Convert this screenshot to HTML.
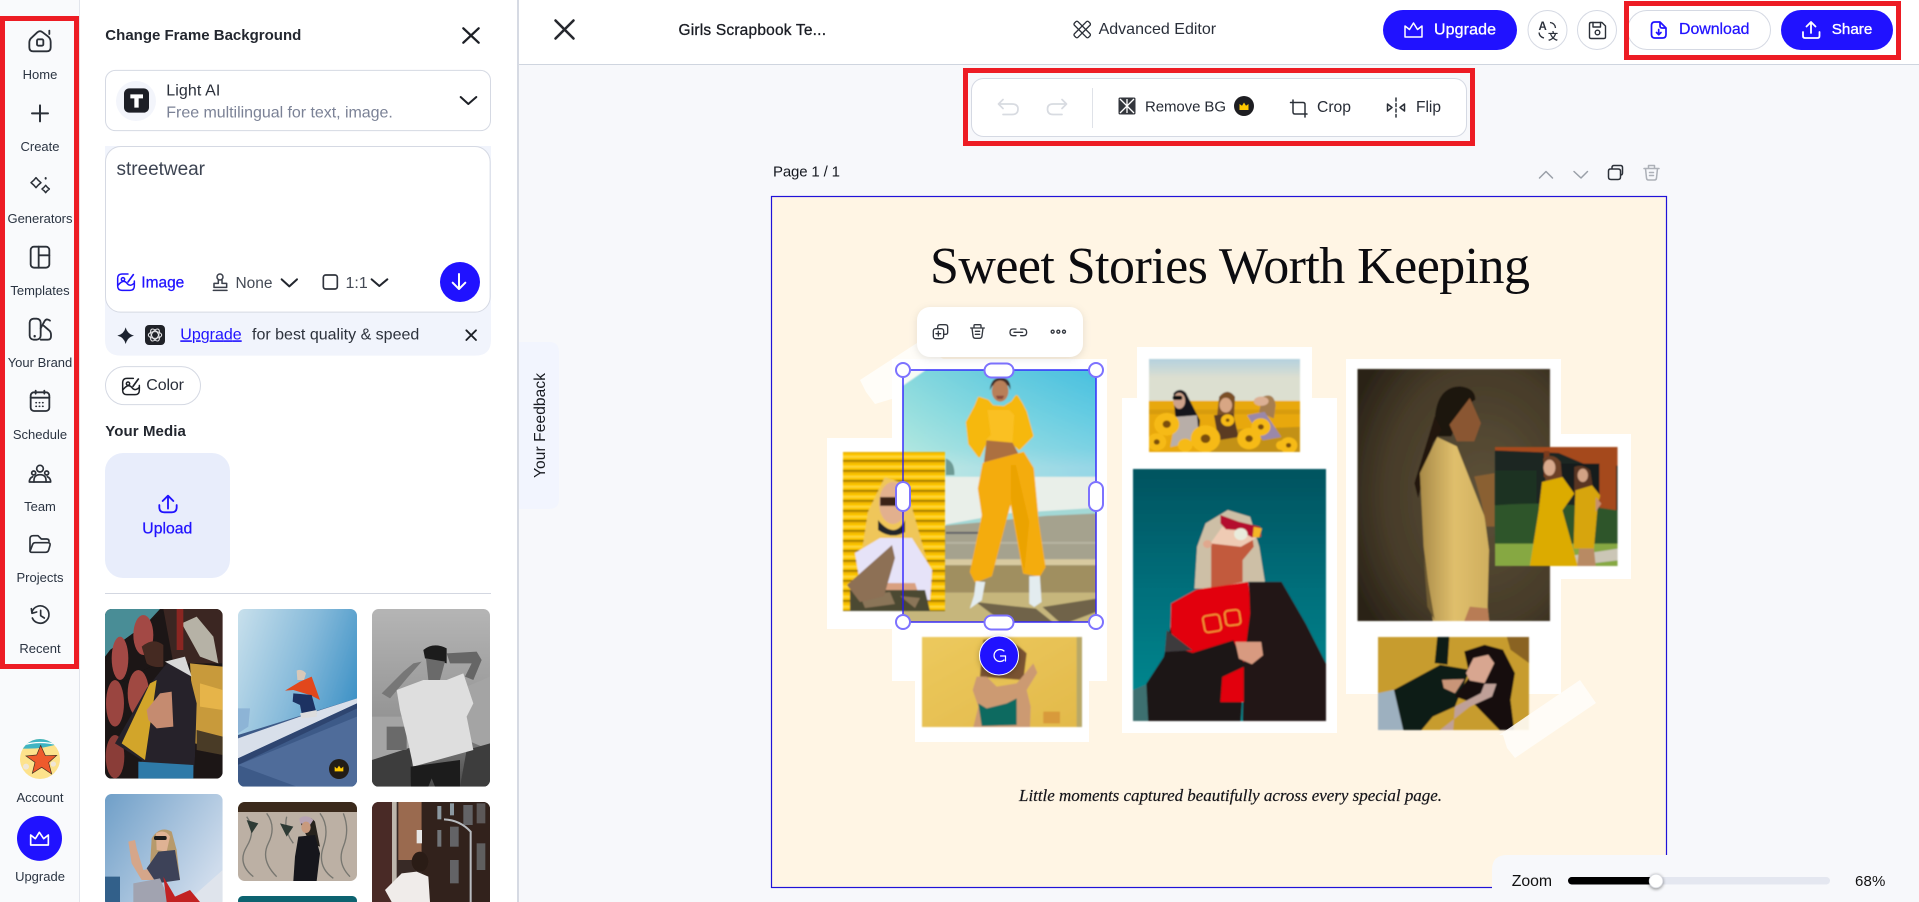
<!DOCTYPE html>
<html lang="en">
<head>
<meta charset="utf-8">
<title>Change Frame Background</title>
<style>
html,body{margin:0;padding:0;width:1919px;height:902px;overflow:hidden;background:#f7f8fb}
svg.root{display:block;position:absolute;left:0;top:0}
text{font-family:"Liberation Sans","Noto Sans CJK SC",sans-serif;white-space:pre}
.lb{font-size:13px;fill:#2b3442;text-anchor:middle}
.t15{font-size:16px;fill:#2a2f3a}
.blue{fill:#2012ff;stroke:#2012ff;stroke-width:.25}
.ic{fill:none;stroke:#2b3038;stroke-linecap:round;stroke-linejoin:round}
</style>
</head>
<body>
<svg class="root" xmlns="http://www.w3.org/2000/svg" width="1919" height="902" viewBox="0 0 1919 902">
<defs>
<filter id="b" x="-2%" y="-2%" width="104%" height="104%"><feGaussianBlur stdDeviation=".8"/></filter>
<linearGradient id="gSky" x1="0" y1="0" x2="0" y2="1"><stop offset="0" stop-color="#5cc6de"/><stop offset=".3" stop-color="#8fdbe2"/><stop offset=".5" stop-color="#b8e6e4"/><stop offset=".62" stop-color="#e9efe9"/></linearGradient>
<linearGradient id="gSkyX" x1="0" y1="0" x2="1" y2="0"><stop offset="0" stop-color="#a8e6dc" stop-opacity=".55"/><stop offset="1" stop-color="#2fb8e2" stop-opacity=".45"/></linearGradient>
<linearGradient id="gFl" x1="0" y1="0" x2="0" y2="1"><stop offset="0" stop-color="#b4d1de"/><stop offset=".45" stop-color="#dcdfd0"/></linearGradient>
<linearGradient id="gTeal" x1="0" y1="0" x2="0" y2="1"><stop offset="0" stop-color="#00535f"/><stop offset=".5" stop-color="#00707c"/><stop offset="1" stop-color="#008c92"/></linearGradient>
<radialGradient id="gDark" cx=".65" cy=".5" r=".75"><stop offset="0" stop-color="#5e5239"/><stop offset=".7" stop-color="#453a28"/><stop offset="1" stop-color="#2b2418"/></radialGradient>
<linearGradient id="gJkt" x1="0" y1="0" x2="1" y2="0"><stop offset="0" stop-color="#a88a48"/><stop offset=".5" stop-color="#e0bf6c"/><stop offset="1" stop-color="#cfae5e"/></linearGradient>
<linearGradient id="gT2" x1="0" y1="0" x2="1" y2=".5"><stop offset="0" stop-color="#c8e0ec"/><stop offset=".55" stop-color="#86bada"/><stop offset="1" stop-color="#3f92c6"/></linearGradient>
<linearGradient id="gT3" x1="0" y1="0" x2="0" y2="1"><stop offset="0" stop-color="#b5b5b5"/><stop offset=".6" stop-color="#959595"/><stop offset="1" stop-color="#4a4a4a"/></linearGradient>
<linearGradient id="gT4" x1="0" y1="0" x2="1" y2=".6"><stop offset="0" stop-color="#6f9fc8"/><stop offset="1" stop-color="#cfdcec"/></linearGradient>
<linearGradient id="gB" x1="0" y1="0" x2="1" y2="1"><stop offset="0" stop-color="#ecc95d"/><stop offset="1" stop-color="#e2b94a"/></linearGradient>
<pattern id="pStripe" width="8" height="10" patternUnits="userSpaceOnUse"><rect width="8" height="10" fill="#fdc600"/><rect y="0" width="8" height="1.4" fill="#7d6000"/><rect y="1.4" width="8" height="2" fill="#e6ad00"/><rect y="6" width="8" height="1.5" fill="#ffdb3d"/></pattern>
<clipPath id="c1"><rect x="315" y="477" width="353" height="509" rx="20"/></clipPath>
<clipPath id="c2"><rect x="714" y="477" width="357" height="533" rx="20"/></clipPath>
<clipPath id="c3"><rect x="1116" y="477" width="354" height="533" rx="20"/></clipPath>
<clipPath id="c4"><rect x="315" y="1032" width="353" height="340" rx="20"/></clipPath>
<clipPath id="c5"><rect x="714" y="1056" width="357" height="237" rx="20"/></clipPath>
<clipPath id="c6"><rect x="1116" y="1056" width="354" height="320" rx="20"/></clipPath>
<clipPath id="cAv"><circle cx="120" cy="927" r="60"/></clipPath>
</defs>

<!-- base regions -->
<rect width="1919" height="902" fill="#f7f8fb"/>
<rect x="0" y="0" width="79" height="902" fill="#f9fafc"/>
<rect x="79" y="0" width="1" height="902" fill="#e2e5ec"/>
<rect x="80" y="0" width="437" height="902" fill="#fff"/>
<rect x="517" y="0" width="2" height="902" fill="#d6dae3"/>
<rect x="519" y="0" width="1400" height="64" fill="#fff"/>
<rect x="519" y="64" width="1400" height="1" fill="#cfd5df"/>

<!-- SIDEBAR labels -->
<text class="lb" x="40" y="79">Home</text>
<text class="lb" x="40" y="151">Create</text>
<text class="lb" x="40" y="223">Generators</text>
<text class="lb" x="40" y="295">Templates</text>
<text class="lb" x="40" y="367">Your Brand</text>
<text class="lb" x="40" y="439">Schedule</text>
<text class="lb" x="40" y="511">Team</text>
<text class="lb" x="40" y="582">Projects</text>
<text class="lb" x="40" y="653">Recent</text>
<text class="lb" x="40" y="802">Account</text>
<text class="lb" x="40" y="881">Upgrade</text>

<!-- zoom-1 coordinate icons -->
<g transform="scale(.33333)">
 <g class="ic" stroke-width="5.5">
  <path d="M88 128Q88 118 96 112L112 97Q120 90 128 97L145 110Q152 116 152 126V142Q152 154 140 154H100Q88 154 88 142Z"/>
  <path d="M148 92V102"/>
  <rect x="111" y="118" width="19" height="19" rx="4"/>
  <path d="M120 316V364M96 340H144" stroke-width="6"/>
  <path stroke-width="4.500" d="M108 533L115 541L123 548L115 555L108 563L101 555L93 548L101 541Z"/>
  <path stroke-width="4.500" d="M137 556L142 562L148 567L142 572L137 578L132 572L126 567L132 562Z"/>
  <path stroke-width="6" d="M137 534V536"/>
  <rect x="92" y="740" width="56" height="63" rx="10"/>
  <path d="M116 740V803M116 766H148"/>
  <rect x="89" y="956" width="33" height="63" rx="12"/>
  <path d="M122 985L134 963Q139 955 147 960L150 962"/>
  <path d="M122 1019H143Q153 1019 153 1009V1004Q153 995 146 990L131 977"/>
  <path stroke-width="7" d="M104 1008V1009"/>
  <rect x="92" y="1177" width="56" height="56" rx="10"/>
  <path d="M107 1172V1181M133 1172V1181M92 1193H148"/>
  <path stroke-width="5" stroke-dasharray="1 9" d="M108 1208H134M108 1219H134"/>
 </g>
 <g class="ic" stroke-width="6" fill="none">
  <path d="M1390 85L1436 128M1436 85L1390 128" stroke="#1d2026" stroke-width="7"/>
  <path d="M1382 291L1405 312L1429 291" stroke="#1d2026" stroke-width="6"/>
 </g>
 <!-- model select box -->
 <rect x="316.5" y="211" width="1155" height="181" rx="30" fill="none" stroke="#d5d9e3" stroke-width="3"/>
 <circle cx="408" cy="303" r="60" fill="#f3f5fb"/>
 <rect x="372" y="265" width="75" height="73" rx="16" fill="#1d1f26"/>
 <path d="M391 283H429V295H416V323H403V295H391Z" fill="#fff"/>
 <!-- prompt box -->
 <path d="M315 438H1473V1020Q1473 1067 1426 1067H362Q315 1067 315 1020Z" fill="#f1f4fc"/>
 <rect x="316.5" y="439.5" width="1154" height="497" rx="46" fill="#fff" stroke="#d5d9e3" stroke-width="3"/>
 <g fill="none" stroke="#2012ff" stroke-width="4.5" stroke-linecap="round" stroke-linejoin="round">
  <path d="M384 822H366Q353 822 353 835V858Q353 871 366 871H390Q403 871 403 858V843"/>
  <path d="M354 856Q370 836 381 850Q390 862 403 849"/>
  <circle cx="369" cy="838" r="5"/>
  <path d="M384 846L400 824" stroke-width="5"/>
 </g>
 <g fill="none" stroke="#3a3f4a" stroke-width="4.5" stroke-linecap="round" stroke-linejoin="round">
  <circle cx="660" cy="831" r="9"/>
  <path d="M655 840V850H642V862H680V850H666V840M640 871H681"/>
  <rect x="970" y="825" width="42" height="42" rx="7" stroke="#30343d" stroke-width="5"/>
  <path d="M845 838L868 859L891 838" stroke="#22262e" stroke-width="6"/>
  <path d="M1115 838L1138 858L1162 838" stroke="#22262e" stroke-width="6"/>
 </g>
 <circle cx="1380" cy="846" r="60" fill="#2012ff"/>
 <path d="M1377 822V865M1358 848L1377 867L1396 848" fill="none" stroke="#fff" stroke-width="6" stroke-linecap="round" stroke-linejoin="round"/>
 <path d="M377 982Q382 1002 402 1007Q382 1012 377 1032Q372 1012 352 1007Q372 1002 377 982Z" fill="#1c2330"/>
 <rect x="435" y="975" width="60" height="60" rx="12" fill="#202228"/>
 <g fill="none" stroke="#e8e8ea" stroke-width="3"><ellipse cx="465" cy="1005" rx="20" ry="10"/><ellipse cx="465" cy="1005" rx="20" ry="10" transform="rotate(60 465 1005)"/><ellipse cx="465" cy="1005" rx="20" ry="10" transform="rotate(120 465 1005)"/></g>
 <path d="M1399 991L1428 1020M1428 991L1399 1020" stroke="#1d2026" stroke-width="5.5" stroke-linecap="round"/>
 <!-- color btn -->
 <rect x="316.5" y="1100" width="285" height="114" rx="57" fill="#fff" stroke="#d5d9e3" stroke-width="3"/>
 <g fill="none" stroke="#1d2026" stroke-width="4.5" stroke-linecap="round" stroke-linejoin="round">
  <path d="M400 1135H381Q368 1135 368 1148V1171Q368 1184 381 1184H405Q418 1184 418 1171V1156"/>
  <path d="M369 1169Q385 1149 396 1163Q405 1175 418 1162"/>
  <circle cx="384" cy="1151" r="5"/>
  <path d="M399 1159L415 1137" stroke-width="5"/>
 </g>
</g>

<!-- zoom-2 coordinate icons -->
<g transform="translate(0 450) scale(.33333)">
 <g class="ic" stroke-width="5">
  <circle cx="120" cy="56" r="10"/>
  <circle cx="101" cy="69" r="6"/><circle cx="140" cy="69" r="6"/>
  <path d="M102 96Q100 74 120 74Q140 74 138 96"/>
  <path d="M88 96H152M88 96Q88 84 98 80M152 96Q152 84 142 80"/>
  <path d="M90 300V266Q90 257 100 257H114L124 267H140Q147 267 147 274"/>
  <path d="M90 304L98 283Q100 278 106 278H144Q152 278 150 286L146 300Q144 307 136 307H95Q90 307 90 302Z"/>
  <path d="M96 486A26 26 0 1 1 97 504"/>
  <path d="M94 476L96 490L110 486"/>
  <path d="M122 481V497L133 504"/>
 </g>
 <!-- upload box -->
 <rect x="315" y="9" width="375" height="375" rx="54" fill="#e8edfb"/>
 <g fill="none" stroke="#2012ff" stroke-width="5.5" stroke-linecap="round" stroke-linejoin="round">
  <path d="M504 140V176M488 153L504 137L520 153"/>
  <path d="M478 165V172Q478 187 493 187H515Q530 187 530 172V165"/>
 </g>
 <rect x="315" y="429" width="1158" height="3" fill="#d3d7e1"/>
 <!-- THUMB 1 -->
 <g filter="url(#b)">
 <g clip-path="url(#c1)">
  <rect x="315" y="477" width="353" height="509" fill="#1b1414"/>
  <path d="M315 477H480L440 520L330 600L315 620Z" fill="#4a8d96"/>
  <path d="M490 477H668V640H520Z" fill="#3a2720"/>
  <path d="M545 520L600 620L655 640L640 560L590 500Z" fill="#b6b2a6"/>
  <path d="M530 477H550V600H530Z" fill="#8a2824"/>
  <path d="M330 600L470 500L470 640L380 690L315 720V640Z" fill="#1a1212"/>
  <ellipse cx="360" cy="625" rx="25" ry="65" fill="#a34a45"/><ellipse cx="430" cy="555" rx="30" ry="60" fill="#a34a45"/>
  <ellipse cx="345" cy="760" rx="27" ry="70" fill="#9a4440"/><ellipse cx="415" cy="730" rx="32" ry="70" fill="#a04843"/>
  <ellipse cx="345" cy="920" rx="28" ry="65" fill="#8a3c38"/>
  <path d="M570 640L668 650V900L585 880Z" fill="#c89a3a"/>
  <path d="M600 700L668 720V780L600 770Z" fill="#e6b448"/>
  <path d="M590 840L668 860V915L590 900Z" fill="#4a3a28"/>
  <path d="M345 880L440 715L500 640L555 620L590 760L585 920L580 986H420L425 930Z" fill="#26232a"/>
  <path d="M365 880L450 700L470 690L435 930Z" fill="#d2a52c"/>
  <path d="M495 635L555 620L575 680L540 660Z" fill="#d8d8d8"/>
  <path d="M415 935L580 945V986H415Z" fill="#2d7aa8"/>
  <path d="M425 590Q460 560 490 585L490 650Q460 655 440 640Z" fill="#452a20"/>
  <path d="M440 780L480 730L515 725L520 830L470 835L445 810Z" fill="#c58b70"/>
 </g>
 <!-- THUMB 2 -->
 <g clip-path="url(#c2)">
  <rect x="714" y="477" width="357" height="533" fill="url(#gT2)"/>
  <path d="M714 855L1071 745V1010H714Z" fill="#3e5a88"/>
  <path d="M714 865L900 800L1071 745V760L714 925Z" fill="#d8dfea"/>
  <path d="M714 925L1071 760V775L714 945Z" fill="#2d4570"/>
  <path d="M714 945L1071 800V1010H890Z" fill="#4f6c9a"/>
  <path d="M714 775H750L745 830L714 850Z" fill="#8db4d6"/>
  <path d="M890 662Q905 655 918 670L912 690L892 690Z" fill="#d8c8b8"/>
  <path d="M855 722L900 695L935 680L960 750L930 735L880 720Z" fill="#e2461a"/>
  <path d="M880 730L935 735L950 790L905 790L900 765L878 755Z" fill="#1f3262"/>
  <path d="M900 790L950 780L950 800L905 805Z" fill="#ddd"/>
  <circle cx="1017" cy="957" r="30" fill="#201c18"/>
  <path d="M1004 964V950L1011 956L1017 947L1023 956L1030 950V964Z" fill="#ffc800"/>
 </g>
 <!-- THUMB 3 -->
 <g clip-path="url(#c3)">
  <rect x="1116" y="477" width="354" height="533" fill="url(#gT3)"/>
  <path d="M1116 800H1230V900L1116 930ZM1400 710L1470 680V900L1400 870Z" fill="#a4a4a4"/>
  <path d="M1116 930L1240 890L1230 1010H1116ZM1400 900L1470 880V1010H1380Z" fill="#3e3e3e"/>
  <path d="M1160 830H1220V900H1160Z" fill="#6a6a6a"/>
  <path d="M1145 730L1210 665L1240 640L1265 635L1225 680L1170 745Z" fill="#777"/>
  <path d="M1340 610L1430 605L1445 630L1420 690L1395 680L1415 640L1350 640Z" fill="#666"/>
  <path d="M1190 720L1270 690L1340 690L1390 670L1420 760L1400 800L1420 900L1240 950L1225 880L1200 780Z" fill="#dedede"/>
  <path d="M1270 600Q1300 575 1340 595L1340 640L1275 625Z" fill="#1d1d1d"/>
  <path d="M1278 625L1335 635L1320 690L1285 690Z" fill="#6a6a6a"/>
  <path d="M1232 950L1380 930L1380 1010H1305L1295 985L1285 1010H1232Z" fill="#1b1b1b"/>
 </g>
 <!-- THUMB 4 -->
 <g clip-path="url(#c4)">
  <rect x="315" y="1032" width="353" height="340" fill="url(#gT4)"/>
  <path d="M315 1280H360V1356H315Z" fill="#32608a"/>
  <path d="M560 1356L668 1260V1356Z" fill="#dfe4ec"/>
  <path d="M455 1165Q480 1125 515 1145L530 1200L540 1290L470 1260L450 1250Z" fill="#b79a6c"/>
  <path d="M468 1150Q495 1135 510 1160L500 1205L470 1200Z" fill="#dfb294"/>
  <rect x="462" y="1158" width="38" height="12" rx="5" fill="#1a1a1a"/>
  <path d="M385 1175L405 1170L410 1195L430 1260L455 1255L470 1210L510 1205L535 1290H425L395 1240Z" fill="#d5a68a"/>
  <path d="M440 1255L475 1205L525 1200L540 1290L470 1300Z" fill="#3d4258"/>
  <path d="M400 1300L480 1285L510 1356H400Z" fill="#a1a3b0"/>
  <path d="M490 1280L525 1340L570 1320L600 1356H500Z" fill="#c22222"/>
 </g>
 <!-- THUMB 5 -->
 <g clip-path="url(#c5)">
  <rect x="714" y="1056" width="357" height="237" fill="#bcb0a4"/>
  <rect x="714" y="1056" width="357" height="30" fill="#3a2a1c"/>
  <g fill="none" stroke="#49504c" stroke-width="4" opacity=".6">
   <path d="M740 1100Q770 1140 740 1190T760 1280M800 1090Q830 1130 805 1180T830 1280M860 1100Q850 1140 880 1180M960 1090Q990 1130 970 1190T1000 1285M1030 1090Q1050 1140 1030 1190T1050 1280"/>
  </g>
  <path d="M840 1120L880 1130L860 1160ZM740 1110L775 1120L755 1150Z" fill="#2e3a34"/>
  <path d="M900 1115Q925 1090 945 1115L960 1190L930 1180Z" fill="#25201e"/>
  <path d="M898 1105Q920 1090 940 1110L930 1125L900 1120Z" fill="#b7a3b4"/>
  <ellipse cx="918" cy="1132" rx="14" ry="17" fill="#c89a7e"/>
  <path d="M895 1160L945 1155L960 1210L950 1293H880L885 1220Z" fill="#12181a"/>
 </g>
 <rect x="714" y="1338" width="357" height="30" rx="14" fill="#0f6470"/>
 <!-- THUMB 6 -->
 <g clip-path="url(#c6)">
  <rect x="1116" y="1056" width="354" height="320" fill="#382a26"/>
  <rect x="1116" y="1056" width="60" height="320" fill="#4a2a26"/>
  <rect x="1176" y="1056" width="14" height="320" fill="#bdb6ac"/>
  <path d="M1195 1056H1265V1230H1195Z" fill="#9a6a50"/>
  <path d="M1265 1056H1470V1356H1265Z" fill="#33241f"/>
  <g fill="#8b98a0"><rect x="1312" y="1068" width="12" height="40"/><rect x="1350" y="1060" width="12" height="36"/><rect x="1390" y="1065" width="28" height="60" opacity=".55"/><rect x="1312" y="1140" width="12" height="50" opacity=".7"/><rect x="1350" y="1130" width="26" height="60" opacity=".55"/><rect x="1430" y="1060" width="26" height="60" opacity=".45"/><rect x="1350" y="1230" width="26" height="70" opacity=".55"/><rect x="1430" y="1180" width="26" height="80" opacity=".5"/></g>
  <path d="M1332 1108Q1380 1110 1412 1145V1356" fill="none" stroke="#b8bcc0" stroke-width="6"/>
  <rect x="1250" y="1140" width="16" height="40" fill="#e6e6e6"/>
  <ellipse cx="1260" cy="1235" rx="25" ry="30" fill="#2c1c14"/>
  <path d="M1155 1320L1205 1270L1250 1265L1285 1280L1290 1356H1175Z" fill="#f0ecea"/>
 </g>
 </g>
 <!-- avatar -->
 <g clip-path="url(#cAv)">
  <rect x="60" y="867" width="120" height="120" fill="#fde28c"/>
  <path d="M60 867H180V880Q120 900 60 895Z" fill="#3fb4c2"/>
  <path d="M70 885Q120 870 175 885" fill="none" stroke="#fff" stroke-width="4"/>
  <path d="M122 886L136 917L170 916L146 938L155 972L125 952L97 970L105 937L78 918L110 915Z" fill="#ee5a2c" stroke="#3c2a20" stroke-width="2"/>
  <circle cx="78" cy="950" r="9" fill="#efe6d8"/><circle cx="160" cy="942" r="8" fill="#efe6d8"/>
 </g>
 <circle cx="118.500" cy="1165" r="67.500" fill="#2012ff"/>
 <path d="M92 1185V1155L106 1166L118 1147L131 1166L145 1155V1185Z" fill="none" stroke="#fff" stroke-width="5" stroke-linejoin="round"/>
</g>

<!-- PANEL TEXT -->
<text x="105.300" y="40" font-size="15" font-weight="700" fill="#23272f" textLength="196">Change Frame Background</text>
<text x="166.300" y="95.500" class="t15" textLength="54">Light AI</text>
<text x="166.300" y="117.300" font-size="16" fill="#7b8296" textLength="226.500">Free multilingual for text, image.</text>
<text x="116.500" y="175" font-size="19" fill="#3d4452" textLength="88.500">streetwear</text>
<text x="141.300" y="287.300" font-size="15.500" class="blue" textLength="43">Image</text>
<text x="235.500" y="288" font-size="15.500" fill="#444a55" textLength="37">None</text>
<text x="345.500" y="288" font-size="16" fill="#444a55">1:1</text>
<text x="180.300" y="339.300" font-size="16" fill="#2012ff" textLength="61.400" text-decoration="underline">Upgrade</text>
<text x="252" y="339.300" font-size="16" fill="#2d323c" textLength="167.300">for best quality &amp; speed</text>
<text x="146.300" y="390" class="t15" textLength="37.700">Color</text>
<text x="105.300" y="436" font-size="15" font-weight="700" fill="#23272f" textLength="80.500">Your Media</text>
<text x="142.300" y="533.300" font-size="15.800" class="blue" textLength="50">Upload</text>

<!-- TOP BAR -->
<path d="M555.500 20.500L573.500 38.500M573.500 20.500L555.500 38.500" stroke="#26282e" stroke-width="2.600" stroke-linecap="round"/>
<text x="678.500" y="35" font-size="15.500" fill="#1a1d24" style="stroke:#1a1d24;stroke-width:.3" textLength="147.500">Girls Scrapbook Te...</text>
<g class="ic" stroke-width="1.300">
 <rect x="1079.700" y="19.500" width="5" height="20" rx="1.500" transform="rotate(-45 1082.200 29.500)"/>
 <rect x="1079.700" y="19.500" width="5" height="20" rx="1.500" transform="rotate(45 1082.200 29.500)"/>
</g>
<text x="1098.600" y="34" font-size="16" fill="#2a2f3a" textLength="117.500">Advanced Editor</text>

<rect x="1383" y="10" width="134" height="40" rx="20" fill="#2012ff"/>
<path d="M1405 37V26L1409.500 29.500L1413.500 23L1417.500 29.500L1422 26V37Z" fill="none" stroke="#fff" stroke-width="1.500" stroke-linejoin="round"/>
<text x="1434" y="34.500" font-size="16" fill="#fff" style="stroke:#fff;stroke-width:.3" textLength="62">Upgrade</text>

<circle cx="1547.500" cy="30" r="19.500" fill="#fff" stroke="#d5d9e3"/>
<text x="1538.500" y="30" font-size="11.500" fill="#2a2f3a" font-weight="700">A</text>
<text x="1548" y="40" font-size="10" fill="#2a2f3a" font-weight="700">文</text>
<path d="M1550 22.500Q1555 23 1555.500 28M1544 38Q1539.500 37 1539 32.500" fill="none" stroke="#2a2f3a" stroke-width="1.300"/>
<circle cx="1597" cy="30" r="19.500" fill="#fff" stroke="#d5d9e3"/>
<g class="ic" stroke-width="1.400"><path d="M1591 22.500H1602L1605.500 26V37Q1605.500 38.500 1604 38.500H1591Q1589.500 38.500 1589.500 37V24Q1589.500 22.500 1591 22.500Z"/><path d="M1593 22.500V27H1600.500V22.500"/><circle cx="1597.500" cy="32.500" r="2.300"/></g>

<!-- Download / Share -->
<rect x="1627.500" y="10.500" width="143" height="39" rx="19.500" fill="#fff" stroke="#d5d9e3"/>
<g fill="none" stroke="#2012ff" stroke-width="1.700" stroke-linecap="round" stroke-linejoin="round">
 <path d="M1660 22H1655Q1651.500 22 1651.500 25.500V34.500Q1651.500 38 1655 38H1662.500Q1666 38 1666 34.500V28L1660 22V26Q1660 28 1662 28H1666"/>
 <path d="M1658.700 29.500V34.500M1656.500 32.500L1658.700 34.700L1661 32.500"/>
</g>
<text x="1679" y="34" font-size="15.900" class="blue" textLength="70.500">Download</text>
<rect x="1781" y="10" width="112" height="40" rx="20" fill="#2012ff"/>
<g fill="none" stroke="#fff" stroke-width="1.800" stroke-linecap="round" stroke-linejoin="round">
 <path d="M1811 33V22.500M1806.500 26.500L1811 22L1815.500 26.500"/>
 <path d="M1803 32V36Q1803 38 1805 38H1817.500Q1819.500 38 1819.500 36V32"/>
</g>
<text x="1831.700" y="34" font-size="15.200" fill="#fff" style="stroke:#fff;stroke-width:.35" textLength="40.600">Share</text>

<!-- TOOLBAR -->
<rect x="971.500" y="78.500" width="495" height="58" rx="12" fill="#fff" stroke="#d5d9e3"/>
<g fill="none" stroke="#d8dbe1" stroke-width="1.700" stroke-linecap="round" stroke-linejoin="round">
 <path d="M1003 99.500L998.500 104L1003 108.500M998.500 104H1012Q1018 104 1018 109Q1018 114.500 1012 114.500H1003"/>
 <path d="M1062 99.500L1066.500 104L1062 108.500M1066.500 104H1053Q1047.500 104 1047.500 109Q1047.500 114.500 1053 114.500H1062"/>
</g>
<rect x="1092" y="88" width="1" height="40" fill="#dfe2e8"/>
<rect x="1118.500" y="97.500" width="17" height="17" rx="1.500" fill="#33363c"/>
<path d="M1120 99L1134 113M1134 99L1120 113M1127 99V113" stroke="#fff" stroke-width="1.300"/>
<text x="1145" y="111.700" font-size="15" fill="#262b35" textLength="81">Remove BG</text>
<circle cx="1244" cy="106" r="10" fill="#1e1e22"/>
<path d="M1239.500 110V104L1242 105.800L1244 102.500L1246 105.800L1248.500 104V110Z" fill="#ffc800"/>
<g class="ic" stroke-width="1.500">
 <path d="M1290.500 102.500H1303Q1305 102.500 1305 104.500V117"/>
 <path d="M1293 100V112Q1293 114 1295 114H1307"/>
 <path d="M1396 98V117" stroke-dasharray="3 2.500"/>
 <path d="M1387.500 104L1392 107.500L1387.500 111Z"/>
 <path d="M1404.500 104L1400 107.500L1404.500 111Z"/>
</g>
<text x="1317" y="112" font-size="15.700" fill="#262b35" textLength="34">Crop</text>
<text x="1416" y="112" font-size="15.500" fill="#262b35" textLength="25">Flip</text>

<!-- Page row -->
<text x="773" y="176.700" font-size="15" fill="#15181f" textLength="67">Page 1 / 1</text>
<g fill="none" stroke-linecap="round" stroke-linejoin="round" stroke-width="1.500">
 <path d="M1539.500 178L1546 171.500L1552.500 178M1574 171.500L1581 178L1587.500 171.500" stroke="#9aa0a8"/>
 <path d="M1612 169V167.500Q1612 165.500 1614 165.500H1620.500Q1622.500 165.500 1622.500 167.500V173Q1622.500 175 1620.500 175M1608.500 171Q1608.500 169 1610.500 169H1618Q1620.500 169 1620.500 171V177Q1620.500 179.500 1618 179.500H1611Q1608.500 179.500 1608.500 177Z" stroke="#2b3038"/>
 <path d="M1644 168.500H1659M1648.500 168.500V165.500H1654.500V168.500M1645.500 168.500L1646.500 178Q1646.700 180 1648.500 180H1654.500Q1656.300 180 1656.500 178L1657.500 168.500M1649.500 172.500H1653.500M1649.500 175.500H1653.500" stroke="#adb1b8"/>
</g>

<!-- FEEDBACK TAB -->
<path d="M519 342H549Q559 342 559 352V499Q559 509 549 509H519Z" fill="#f2f5fe"/>
<text transform="translate(545 478) rotate(-90)" font-size="15.500" fill="#16191f" textLength="105">Your Feedback</text>

<!-- CANVAS -->
<rect x="771.500" y="196.500" width="895" height="691" fill="#fff5e4" stroke="#2012d8" stroke-width="1.200"/>
<text x="930" y="283" style="font-family:'Liberation Serif',serif" font-size="52" fill="#0c0c10" textLength="600">Sweet Stories Worth Keeping</text>
<text x="1019" y="801" style="font-family:'Liberation Serif',serif;stroke:#15151a;stroke-width:.2" font-size="17" font-style="italic" fill="#15151a" textLength="423">Little moments captured beautifully across every special page.</text>

<!-- tape TL -->
<path d="M860 380L917 343L945 360L905 395L875 404L866 392Z" fill="#fffdf8"/>
<!-- frames -->
<rect x="892" y="359" width="215" height="322" fill="#fff"/>
<rect x="827" y="438" width="130" height="191" fill="#fff"/>
<rect x="915" y="630" width="174" height="112" fill="#fff"/>
<rect x="1137" y="347" width="175" height="60" fill="#fff"/>
<rect x="1122" y="398" width="215" height="335" fill="#fff"/>
<rect x="1346" y="359" width="215" height="335" fill="#fff"/>
<rect x="1490" y="434" width="141" height="145" fill="#fff"/>

<!-- SELECTED PHOTO -->
<g filter="url(#b)">
<svg x="903" y="370" width="193" height="252" viewBox="22 15 578 755" preserveAspectRatio="none">
 <rect x="22" y="15" width="578" height="470" fill="url(#gSky)"/>
 <rect x="22" y="15" width="578" height="320" fill="url(#gSkyX)"/>
 <path d="M22 62L90 15H22Z" fill="#f7fbf5"/>
 <path d="M150 478L330 445L600 428V448L350 465L150 485Z" fill="#a3d8d6"/>
 <path d="M22 492L250 472L450 452L600 445V770H22Z" fill="#a5a28e"/>
 <path d="M150 530H600V536H150Z" fill="#b8b5a2"/>
 <path d="M150 500H250V506H150Z" fill="#5e6066"/>
 <rect x="22" y="582" width="578" height="18" fill="#d8caa0"/>
 <rect x="22" y="600" width="578" height="82" fill="#a08f60"/>
 <rect x="22" y="682" width="578" height="88" fill="#c6b67c"/>
 <path d="M240 710L320 770H470L420 730ZM440 725L600 700V740L520 770H490Z" fill="#6f6449"/>
 <path d="M150 280Q178 290 176 330L150 330Z" fill="#6d9a94"/>
 <path d="M282 75Q285 38 315 38Q345 38 344 75L338 62L290 62Z" fill="#3a2a26"/>
 <ellipse cx="313" cy="78" rx="25" ry="32" fill="#b97f58"/>
 <path d="M300 92L325 92L320 102L305 102Z" fill="#8a4a3a"/>
 <path d="M250 100L275 108L290 125L325 128L350 112L362 95L375 115L388 140L408 212L370 250L350 232L272 225L250 272L222 235L215 172L240 125Z" fill="#f6b80f" stroke="#f6b80f" stroke-width="10" stroke-linejoin="round"/>
 <path d="M275 135L285 210L270 225L350 232L355 150L340 135Z" fill="#fac021"/>
 <path d="M272 226L350 233L368 266L300 290L264 296Z" fill="#ac6f3f"/>
 <path d="M264 296L382 264L410 310L425 470L445 605L430 630L385 622L345 400L285 630L240 648L226 620L262 450L250 370Z" fill="#f4ac0b" stroke="#f4ac0b" stroke-width="8" stroke-linejoin="round"/>
 <path d="M345 400L345 300L360 300L400 470L385 622Z" fill="#eba304"/>
 <path d="M240 648L268 650L258 705L222 730L235 690Z" fill="#e3ecef"/>
 <path d="M400 633L432 632L437 710L415 725L400 715Z" fill="#e3ecef"/>
</svg>
</g>

<!-- YELLOW LEFT PHOTO -->
<g filter="url(#b)">
<svg x="843" y="452" width="102" height="159" viewBox="843 452 102 159">
 <rect x="843" y="452" width="102" height="159" fill="url(#pStripe)"/>
 <path d="M860 565L868 512L885 477L905 484L914 515L928 565Z" fill="#efc65a"/>
 <ellipse cx="893" cy="503" rx="14" ry="21" fill="#e2b08e"/>
 <path d="M880 497H906V506H880Z" fill="#3a2018"/>
 <path d="M878 520Q895 540 905 520V532Q892 540 878 530Z" fill="#23252a"/>
 <path d="M855 553L880 538L912 538L932 570L930 600L920 600L915 583L860 583Z" fill="#e6e3f8"/>
 <path d="M860 583H915L918 592H858Z" fill="#d9a080"/>
 <path d="M850 590H925L930 611H850Z" fill="#4b4a30"/>
 <path d="M860 596L890 592L895 604L865 608ZM900 596L920 598L915 608Z" fill="#8a7458"/>
 <path d="M847 585L892 545L895 558L884 596L860 602Z" fill="#8d6f55"/>
</svg>
</g>

<!-- LOWER YELLOW PHOTO -->
<g filter="url(#b)">
<svg x="922" y="637" width="160" height="90" viewBox="366 291 480 270" preserveAspectRatio="none">
 <rect x="366" y="291" width="480" height="270" fill="url(#gB)"/>
 <path d="M830 291H846V561H830Z" fill="#b8a868"/>
 <path d="M730 515H780V550H730Z" fill="#d89a3a"/>
 <path d="M550 300Q620 280 680 340L670 420L540 410Z" fill="#7a5230"/>
 <path d="M518 450L530 410L560 410L590 440L650 430L700 370L712 398L680 450L692 500L690 561H520L535 500Z" fill="#cc9a72"/>
 <path d="M535 490L560 505L620 490L650 475L650 555L545 558Z" fill="#0f6b61"/>
</svg>
</g>

<!-- FLOWERS PHOTO -->
<g filter="url(#b)">
<svg x="1149" y="359" width="151" height="93" viewBox="132 87 409 278" preserveAspectRatio="none">
 <rect x="132" y="87" width="409" height="125" fill="url(#gFl)"/>
 <rect x="132" y="212" width="409" height="153" fill="#e8a80e"/>
 <path d="M132 238H541V252H132Z" fill="#c78f10" opacity=".5"/>
 <path d="M300 300L540 290V365H300Z" fill="#8c6f1c" opacity=".4"/>
 <path d="M198 190Q215 170 232 188L270 270L268 300L205 290Z" fill="#17151a"/>
 <path d="M205 260L262 255L268 330L190 350Z" fill="#b8aea8"/>
 <ellipse cx="214" cy="212" rx="16" ry="24" fill="#cda28a"/>
 <rect x="196" y="197" width="26" height="12" rx="5" fill="#111"/>
 <path d="M322 200Q345 170 365 200L362 270L315 270Z" fill="#7a5028"/>
 <ellipse cx="340" cy="225" rx="17" ry="22" fill="#d8a684"/>
 <path d="M308 255L360 250L375 320L320 330Z" fill="#5a3a20"/>
 <path d="M440 200Q470 185 475 225L470 265L430 245Z" fill="#a67e50"/>
 <ellipse cx="436" cy="213" rx="20" ry="14" fill="#dcb094"/>
 <path d="M398 255L445 245L490 320L440 330Z" fill="#9a88aa"/>
 <g fill="#f6ba12"><circle cx="180" cy="282" r="34"/><circle cx="285" cy="325" r="40"/><circle cx="435" cy="290" r="26"/><circle cx="403" cy="325" r="32"/><circle cx="153" cy="335" r="26"/><circle cx="510" cy="345" r="24"/><circle cx="345" cy="270" r="18"/><circle cx="230" cy="345" r="20"/><circle cx="490" cy="345" r="14"/></g>
 <g fill="#7a4d10"><circle cx="180" cy="282" r="11"/><circle cx="285" cy="325" r="13"/><circle cx="435" cy="290" r="8"/><circle cx="403" cy="325" r="10"/><circle cx="153" cy="335" r="8"/><circle cx="510" cy="345" r="7"/><circle cx="345" cy="270" r="5"/></g>
</svg>
</g>

<!-- TEAL PHOTO -->
<g filter="url(#b)">
<svg x="1133" y="469" width="193" height="252" viewBox="89 417 521 755" preserveAspectRatio="none">
 <rect x="89" y="417" width="521" height="755" fill="url(#gTeal)"/>
 <path d="M89 1080L130 1060L160 1172H89Z" fill="#3c7070"/>
 <path d="M255 775L262 650L285 580L345 540L405 560L430 650L445 755L400 755L300 775Z" fill="#cdbfa6"/>
 <path d="M300 640L345 590L410 610L415 650L385 690L385 755L300 775Z" fill="#c25a3c"/>
 <path d="M298 640L330 590L410 600L420 625L380 650Z" fill="#efcbb4"/>
 <circle cx="290" cy="642" r="12" fill="#e0a88e"/>
 <path d="M325 555L375 575L432 590L435 620L410 622L375 600L340 598L325 580Z" fill="#b4112e"/>
 <path d="M415 590L437 595L430 622L412 622Z" fill="#f5b625"/>
 <circle cx="380" cy="612" r="18" fill="#e9ecdc"/>
 <path d="M192 820L260 778L400 755L410 850L388 1115L320 1115L190 905Z" fill="#e2000e"/>
 <g fill="none" stroke="#f2a23a" stroke-width="4"><rect x="280" y="855" width="45" height="50" rx="10" transform="rotate(-10 300 880)"/><rect x="338" y="840" width="40" height="45" rx="10" transform="rotate(-8 358 862)"/></g>
 <path d="M402 755L490 755L555 880L610 1000V1172H385L388 1000L405 850Z" fill="#211817"/>
 <path d="M190 890L200 950L250 968L360 930L390 1000L380 1172H130L125 1060L172 980Z" fill="#1d1514"/>
 <path d="M330 1040L388 1010L388 1115L325 1115Z" fill="#e2000e"/>
 <path d="M365 935L435 935L440 975L410 1002L375 985Z" fill="#d89a80"/>
 <path d="M180 900L250 960L175 965Z" fill="#3c3a3e"/>
</svg>
</g>

<!-- DARK WOMAN PHOTO -->
<g filter="url(#b)">
<svg x="1357.500" y="369" width="192.500" height="252" viewBox="696 118 521 755" preserveAspectRatio="none">
 <rect x="696" y="118" width="521" height="755" fill="url(#gDark)"/>
 <path d="M905 270Q910 170 975 170Q1015 175 1015 210L985 230L950 320L915 320Z" fill="#1f130d"/>
 <path d="M1000 205L1030 280L1012 335L965 335L945 285Z" fill="#8a5730"/>
 <path d="M905 260L850 460L860 505L900 340L925 300Z" fill="#20130d"/>
 <path d="M912 322L965 350L1040 560L1052 660L1048 830L1052 873H900L875 650L865 430Z" fill="url(#gJkt)"/>
 <path d="M875 680L905 870L885 830Z" fill="#6f5c30"/>
 <path d="M1012 440L1068 430V590L1045 590L1030 510Z" fill="#8a6132"/>
 <path d="M1000 830L1048 835L1052 873H985Z" fill="#b87b55"/>
</svg>
</g>

<!-- DRESS PHOTO -->
<g filter="url(#b)">
<svg x="1495" y="447" width="122.600" height="119" viewBox="1068 350 331 357" preserveAspectRatio="none">
 <rect x="1068" y="350" width="331" height="357" fill="#1c2520"/>
 <path d="M1068 350H1399V405L1350 420L1240 368L1068 360Z" fill="#a5481c"/>
 <path d="M1350 370H1395V540H1350Z" fill="#a5481c"/>
 <path d="M1200 362H1215V440H1200Z" fill="#7c3a1c"/>
 <path d="M1068 420H1180V525H1068Z" fill="#1f3322"/>
 <path d="M1240 400H1350V500H1240Z" fill="#171d1c"/>
 <path d="M1068 525Q1230 510 1399 540V645H1068Z" fill="#2e5429"/>
 <rect x="1068" y="640" width="331" height="67" fill="#86a842"/>
 <path d="M1280 675L1399 655V690L1285 705Z" fill="#cbc6b6"/>
 <path d="M1282 410Q1305 400 1325 420L1335 490L1282 495Z" fill="#5a3520"/>
 <ellipse cx="1305" cy="435" rx="14" ry="20" fill="#d2a284"/>
 <path d="M1285 480L1330 465L1352 495L1345 530L1335 655H1280Z" fill="#d7a50a"/>
 <path d="M1340 500L1355 520L1340 545Z" fill="#c6916e"/>
 <path d="M1198 385Q1225 365 1245 395L1252 480L1205 460Z" fill="#6c4028"/>
 <ellipse cx="1215" cy="412" rx="16" ry="24" fill="#d8a98c"/>
 <path d="M1195 455L1250 440L1282 490L1250 540L1292 707H1162L1186 540Z" fill="#dcab00"/>
 <path d="M1290 707H1340L1335 655H1295Z" fill="#b88a64"/>
</svg>
</g>

<!-- LOWER WOMAN PHOTO -->
<g filter="url(#b)">
<svg x="1378" y="637" width="151" height="93" viewBox="752 922 408 278" preserveAspectRatio="none">
 <rect x="752" y="922" width="408" height="278" fill="#c79c2f"/>
 <path d="M1100 922H1160V1000L1110 960Z" fill="#8a6420"/>
 <path d="M905 1000L912 922H945L940 1005Z" fill="#0f1a14"/>
 <path d="M795 1080L920 1005L1000 1020L960 1130L900 1160L870 1200H805Z" fill="#0f1a14"/>
 <path d="M752 1090L795 1080L820 1200H752Z" fill="#9db0bf"/>
 <path d="M985 965L1040 945L1090 960L1122 1030L1110 1110L1120 1200H1080L1010 1120L960 1100L1000 1040Z" fill="#14100f"/>
 <path d="M990 1030L1010 985L1050 975L1066 1000L1040 1060L1000 1052Z" fill="#d8a690"/>
 <path d="M925 1050L985 1048L960 1090L930 1075Z" fill="#c99578"/>
 <path d="M920 1200L1000 1130L1060 1100L1072 1062L1040 1062L1030 1090L960 1130L955 1200Z" fill="#bfa098"/>
</svg>
</g>
<!-- lower tape -->
<path d="M1580 680L1596 703L1515 758L1507 748L1503 735L1499 735Z" fill="#fffdf8" opacity=".9"/>

<!-- SELECTION -->
<rect x="903" y="370" width="193" height="252" fill="none" stroke="#2012ff" stroke-width="1.300"/>
<g fill="#fff" stroke="#7d72ff" stroke-width="2">
 <circle cx="903" cy="370" r="7"/><circle cx="1096" cy="370" r="7"/><circle cx="903" cy="622" r="7"/><circle cx="1096" cy="622" r="7"/>
 <rect x="984.500" y="363.500" width="29" height="14" rx="7"/><rect x="984.500" y="615.500" width="29" height="14" rx="7"/>
 <rect x="896" y="482" width="14" height="29" rx="7"/><rect x="1089" y="482" width="14" height="29" rx="7"/>
</g>
<circle cx="999" cy="655.500" r="19.500" fill="#2012ff" stroke="#fff" stroke-width="1" style="filter:drop-shadow(0 1px 3px rgba(0,0,0,.25))"/>
<path d="M1004 651A6 6 0 1 0 1004 660M1000.500 656H1005.500L1005.500 661" fill="none" stroke="#fff" stroke-width="1.200" stroke-linecap="round"/>

<!-- floating toolbar -->
<rect x="917" y="307" width="166" height="50" rx="13" fill="#fff" style="filter:drop-shadow(0 2px 4px rgba(0,0,0,.1))"/>
<g transform="translate(770 200) scale(.33333)" fill="none" stroke="#33373f" stroke-width="4" stroke-linecap="round" stroke-linejoin="round">
 <rect x="490" y="386" width="31" height="30" rx="7"/>
 <path d="M503 385V381Q503 374 510 374H526Q533 374 533 381V397Q533 403 526 403H521"/>
 <path d="M505 394V408M498 401H512"/>
 <path d="M602 384H643M612 384V377Q612 374 615 374H630Q633 374 633 377V384M606 384L609 408Q610 415 617 415H628Q635 415 636 408L639 384M616 394H629M616 403H629"/>
 <path d="M738 387H730Q720 387 720 397Q720 407 730 407H738M752 387H760Q770 387 770 397Q770 407 760 407H752M732 397H758"/>
 <circle cx="848" cy="395" r="4.500"/><circle cx="865" cy="395" r="4.500"/><circle cx="882" cy="395" r="4.500"/>
</g>

<!-- ZOOM PANEL -->
<path d="M1492 902V870Q1492 855 1507 855H1919V902Z" fill="#f7f8fb"/>
<text x="1511.700" y="886" font-size="15.800" fill="#111" textLength="40.300">Zoom</text>
<rect x="1568" y="877" width="262" height="7.500" rx="3.700" fill="#e4e7f0"/>
<rect x="1568" y="877" width="88" height="7.500" rx="3.700" fill="#000"/>
<circle cx="1656" cy="881" r="6.800" fill="#fff" stroke="#d8dae0" stroke-width=".8" style="filter:drop-shadow(0 1px 1.500px rgba(0,0,0,.45))"/>
<text x="1855" y="886" font-size="15" fill="#111" textLength="30.300">68%</text>

<!-- RED ANNOTATIONS -->
<g fill="none" stroke="#ed1c24" stroke-width="5">
 <rect x="2.500" y="18.500" width="74" height="648"/>
 <rect x="965.500" y="70.500" width="507" height="73"/>
 <rect x="1626.500" y="3.500" width="272" height="54"/>
</g>
</svg>
</body>
</html>
